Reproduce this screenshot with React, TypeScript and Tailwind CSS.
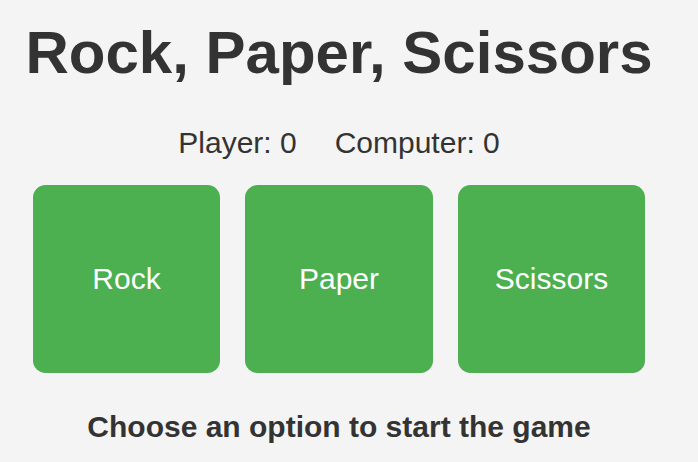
export default function App() {
  const options = ["Rock", "Paper", "Scissors"];
  return (
    <div className="min-h-[462px] w-full bg-[#f4f4f4] text-[#333333]" style={{ fontFamily: '"Liberation Sans", Arial, sans-serif' }}>
      <div className="flex w-[678px] flex-col items-center">
        <h1 className="pt-[18px] text-[60px] font-bold leading-[69px]">Rock, Paper, Scissors</h1>
        <div className="mt-[38.5px] flex gap-[38px] text-[30px] leading-[34.5px]">
          <span>Player: 0</span>
          <span>Computer: 0</span>
        </div>
        <div className="mt-[25px] flex gap-[25px]">
          {options.map((o) => (
            <button
              key={o}
              className="flex h-[187.5px] w-[187.5px] items-center justify-center rounded-[12.5px] bg-[#4caf50] text-[30px] leading-[34.5px] text-white"
            >
              {o}
            </button>
          ))}
        </div>
        <p className="mt-[37.5px] text-[30px] font-bold leading-[34.5px]">Choose an option to start the game</p>
      </div>
    </div>
  );
}
